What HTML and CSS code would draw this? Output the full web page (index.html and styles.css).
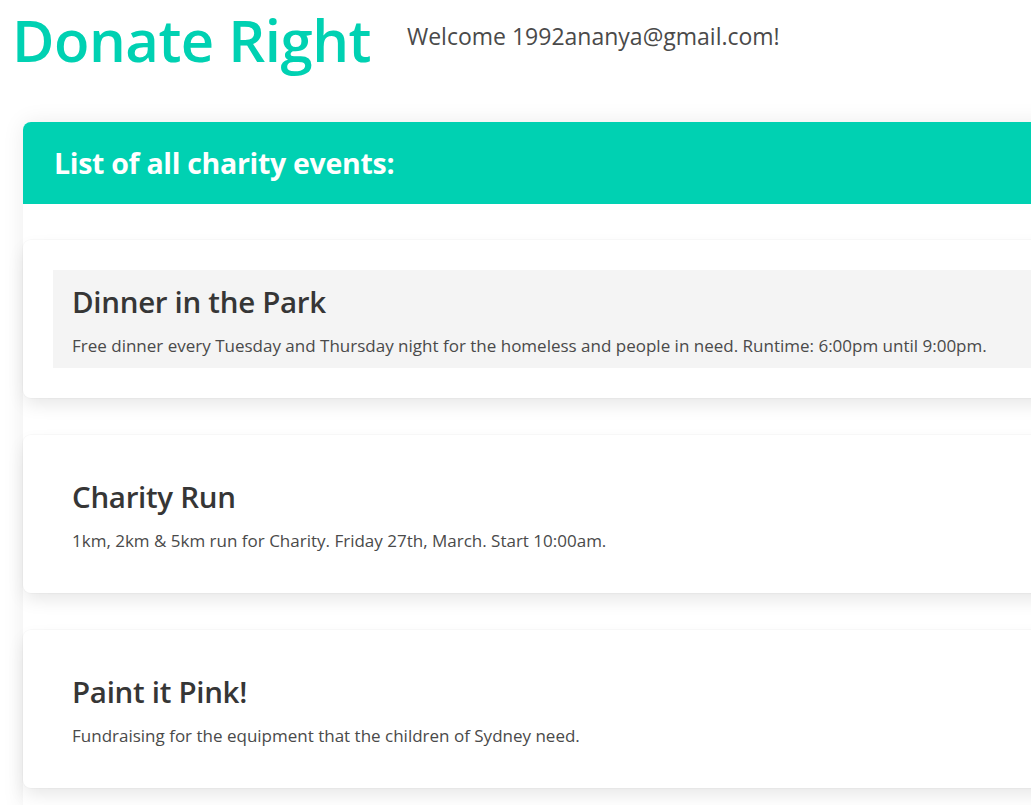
FILE: index.html
```html
<!DOCTYPE html>
<html lang="en">
<head>
<meta charset="utf-8">
<title>Donate Right</title>
<link rel="stylesheet" href="styles.css">
</head>
<body>
<header class="topbar">
  <h1 class="brand">Donate Right</h1>
  <p class="welcome">Welcome 1992ananya@gmail.com!</p>
</header>
<main class="panel">
  <div class="panel-head">
    <h2 class="panel-title">List of all charity events:</h2>
  </div>
  <div class="panel-body">
    <article class="event">
      <div class="event-inner is-active">
        <h3 class="event-title">Dinner in the Park</h3>
        <p class="event-desc">Free dinner every Tuesday and Thursday night for the homeless and people in need. Runtime: 6:00pm until 9:00pm.</p>
      </div>
    </article>
    <article class="event">
      <div class="event-inner">
        <h3 class="event-title">Charity Run</h3>
        <p class="event-desc">1km, 2km &amp; 5km run for Charity. Friday 27th, March. Start 10:00am.</p>
      </div>
    </article>
    <article class="event">
      <div class="event-inner">
        <h3 class="event-title">Paint it Pink!</h3>
        <p class="event-desc">Fundraising for the equipment that the children of Sydney need.</p>
      </div>
    </article>
  </div>
</main>
</body>
</html>
```

FILE: styles.css
```css
html {
  overflow: hidden;
}
body {
  margin: 0;
  background: #ffffff;
  font-family: "Open Sans", "Noto Sans", sans-serif;
  color: #4a4a4a;
}
.topbar {
  display: flex;
  align-items: flex-start;
  gap: 36px;
  padding: 0 0 0 12px;
  height: 122px;
}
.brand {
  margin: 0;
  font-size: 58px;
  font-weight: 600;
  line-height: 80px;
  color: #00d1b2;
  letter-spacing: -0.5px;
}
.welcome {
  margin: 0;
  padding-top: 20px;
  font-size: 23px;
  line-height: 32px;
  color: #4a4a4a;
}
.panel {
  margin-left: 23px;
  width: 1100px;
  border-radius: 8px 0 0 0;
  box-shadow: 0 0 22px rgba(10, 10, 10, 0.08);
  background: #ffffff;
}
.panel-head {
  background: #00d1b2;
  height: 82px;
  display: flex;
  align-items: center;
  padding-left: 31px;
  border-radius: 8px 0 0 0;
}
.panel-title {
  margin: 0;
  font-size: 28.5px;
  font-weight: 700;
  color: #ffffff;
  letter-spacing: -0.3px;
}
.panel-body {
  display: flex;
  flex-direction: column;
  gap: 37px;
  padding: 36px 0 20px;
}
.event {
  background: #ffffff;
  border-radius: 8px 0 0 8px;
  padding: 30px;
  box-shadow: 0 8px 18px -2px rgba(10, 10, 10, 0.1), 0 0 0 1px rgba(10, 10, 10, 0.02);
}
.event-inner {
  padding: 12px 19px 10px;
}
.event-inner.is-active {
  background: #f4f4f4;
}
.event-title {
  margin: 0;
  font-size: 29.5px;
  font-weight: 600;
  line-height: 40px;
  color: #363636;
  letter-spacing: -0.3px;
}
.event-desc {
  margin: 12px 0 0;
  font-size: 17px;
  line-height: 24px;
  color: #4a4a4a;
}
```
